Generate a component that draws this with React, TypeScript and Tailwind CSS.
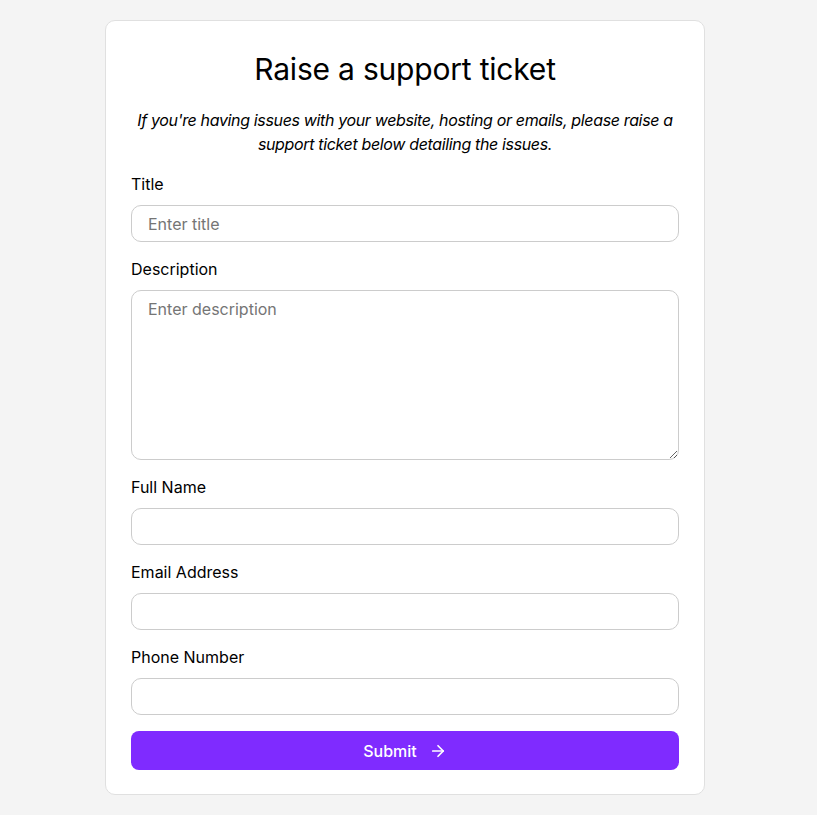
import { ArrowRight } from "lucide-react";

const fields = [
  { label: "Full Name", type: "text" },
  { label: "Email Address", type: "email" },
  { label: "Phone Number", type: "tel" },
];

export default function App() {
  return (
    <div className="min-h-screen bg-[#f4f4f4] pt-5 pr-[7px] font-['Inter',sans-serif] text-black">
      <form className="mx-auto w-[600px] rounded-[10px] border border-[#e0e0e0] bg-white px-[25px] pt-[25px] pb-[24px]">
        <h1 className="text-center text-[30px] leading-[46px] font-normal tracking-[-0.2px]">Raise a support ticket</h1>
        <p className="mt-4 text-center text-[16px] leading-6 tracking-[-0.35px] italic">
          If you're having issues with your website, hosting or emails, please raise a support ticket below detailing the issues.
        </p>

        <label className="mt-4 mb-[9px] block text-[16px] leading-6">Title</label>
        <input
          type="text"
          placeholder="Enter title"
          className="block h-[37px] w-full rounded-[10px] border border-[#cccccc] px-4 text-[16px] placeholder:text-[#757575] outline-none"
        />

        <label className="mt-[15px] mb-[9px] block text-[16px] leading-6">Description</label>
        <textarea
          placeholder="Enter description"
          className="block h-[170px] w-full rounded-[10px] border border-[#cccccc] px-4 py-[6px] text-[16px] leading-6 placeholder:text-[#757575] outline-none"
        />

        {fields.map((f) => (
          <div key={f.label}>
            <label className="mt-[15px] mb-[9px] block text-[16px] leading-6">{f.label}</label>
            <input
              type={f.type}
              className="block h-[37px] w-full rounded-[10px] border border-[#cccccc] px-4 text-[16px] outline-none"
            />
          </div>
        ))}

        <button
          type="button"
          className="mt-4 flex h-[39px] w-full items-center justify-center gap-3 rounded-[8px] bg-[#7f2bff] text-[16px] font-medium text-white"
        >
          Submit
          <ArrowRight className="h-[18px] w-[18px]" strokeWidth={2.25} />
        </button>
      </form>
    </div>
  );
}
